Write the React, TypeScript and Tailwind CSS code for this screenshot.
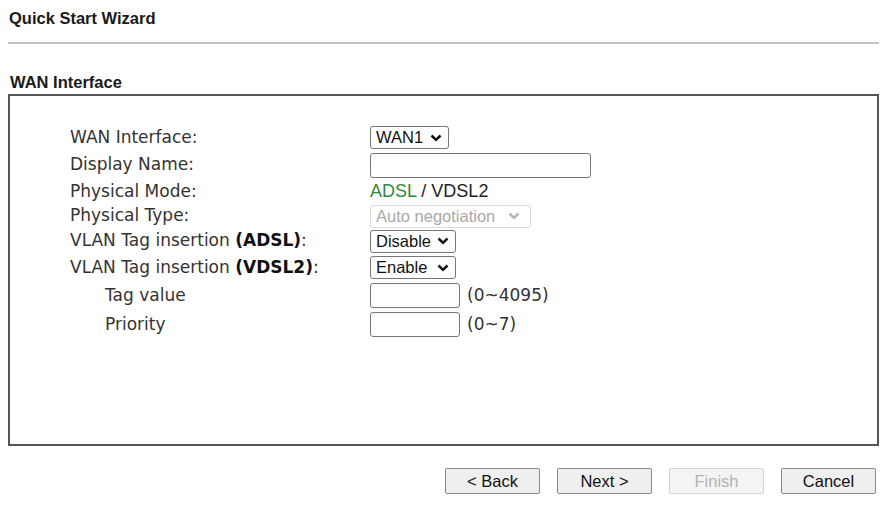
import React from 'react';

const Chevron = ({ disabled }: { disabled?: boolean }) => (
  <svg width="12" height="8" viewBox="0 0 12 8" className="shrink-0">
    <path
      d="M1.5 1.5 L6 5.8 L10.5 1.5"
      fill="none"
      stroke={disabled ? '#b5b5b5' : '#111'}
      strokeWidth="2.5"
    />
  </svg>
);

function FakeSelect({ value, width, disabled }: { value: string; width: string; disabled?: boolean }) {
  return (
    <div
      className={`flex h-[23px] items-center justify-between rounded-[3px] border pl-[5px] pr-[6px] text-[16.5px] ${width} ${
        disabled ? 'border-[#dcdcdc] text-[#a8a8a8]' : 'border-[#767676] text-[#111]'
      }`}
      style={{ fontFamily: '"Liberation Sans", Arial, sans-serif' }}
    >
      <span>{value}</span>
      <Chevron disabled={disabled} />
    </div>
  );
}

function TextBox({ width }: { width: string }) {
  return <div className={`h-[25px] rounded-[3px] border border-[#767676] bg-white ${width}`} />;
}

function Row({ label, h, indent, children }: { label: React.ReactNode; h: string; indent?: boolean; children: React.ReactNode }) {
  return (
    <div className={`flex items-center ${h}`}>
      <div className={`w-[300px] ${indent ? 'pl-[35px]' : ''}`}>{label}</div>
      <div className="flex items-center">{children}</div>
    </div>
  );
}

function Btn({ label, disabled }: { label: string; disabled?: boolean }) {
  return (
    <button
      className={`h-[26px] w-[95px] rounded-[2px] border text-[16.5px] ${
        disabled ? 'border-[#d6d6d6] bg-[#f4f4f4] text-[#b3b3b3]' : 'border-[#8a8a8a] bg-[#efefef] text-[#111]'
      }`}
      style={{ fontFamily: '"Liberation Sans", Arial, sans-serif' }}
    >
      {label}
    </button>
  );
}

export default function App() {
  return (
    <div className="h-[517px] w-[896px] bg-white px-[8px]" style={{ fontFamily: '"Liberation Sans", Arial, sans-serif' }}>
      <div className="pt-[8px] pl-[1px] text-[16.5px] font-bold leading-[20px] text-[#1a1a1a]">Quick Start Wizard</div>
      <div className="mt-[14px] h-[2px] w-[871px] bg-[#c4c4c4]" />
      <div className="mt-[29px] pl-[2px] text-[16.5px] font-bold leading-[18px] text-[#1a1a1a]">WAN Interface</div>
      <div className="mt-[3px] h-[352px] w-[871px] border-2 border-[#555] pt-[28px] pl-[60px]">
        <div className="text-[17px] text-[#333]" style={{ fontFamily: '"DejaVu Sans", Verdana, sans-serif' }}>
          <Row label="WAN Interface:" h="h-[27px]">
            <FakeSelect value="WAN1" width="w-[79px]" />
          </Row>
          <Row label="Display Name:" h="h-[28px]">
            <TextBox width="w-[221px]" />
          </Row>
          <Row label="Physical Mode:" h="h-[25px]">
            <span className="text-[18px]" style={{ fontFamily: '"Liberation Sans", Arial, sans-serif' }}>
              <span className="text-[#2f8a3c]">ADSL</span>
              <span className="text-[#222]"> / VDSL2</span>
            </span>
          </Row>
          <Row label="Physical Type:" h="h-[24px]">
            <div className="[&>div]:pr-[10px]">
              <FakeSelect value="Auto negotiation" width="w-[161px]" disabled />
            </div>
          </Row>
          <Row
            label={
              <span>
                VLAN Tag insertion <b className="text-[#111]">(ADSL)</b>:
              </span>
            }
            h="h-[26px]"
          >
            <FakeSelect value="Disable" width="w-[86px]" />
          </Row>
          <Row
            label={
              <span>
                VLAN Tag insertion <b className="text-[#111]">(VDSL2)</b>:
              </span>
            }
            h="h-[27px]"
          >
            <FakeSelect value="Enable" width="w-[86px]" />
          </Row>
          <Row label="Tag value" h="h-[29px]" indent>
            <TextBox width="w-[90px]" />
            <span className="ml-[7px]">(0~4095)</span>
          </Row>
          <Row label="Priority" h="h-[29px]" indent>
            <TextBox width="w-[90px]" />
            <span className="ml-[7px]">(0~7)</span>
          </Row>
        </div>
      </div>
      <div className="mt-[22px] flex w-[868px] justify-end gap-[17px]">
        <Btn label="< Back" />
        <Btn label="Next >" />
        <Btn label="Finish" disabled />
        <Btn label="Cancel" />
      </div>
    </div>
  );
}
